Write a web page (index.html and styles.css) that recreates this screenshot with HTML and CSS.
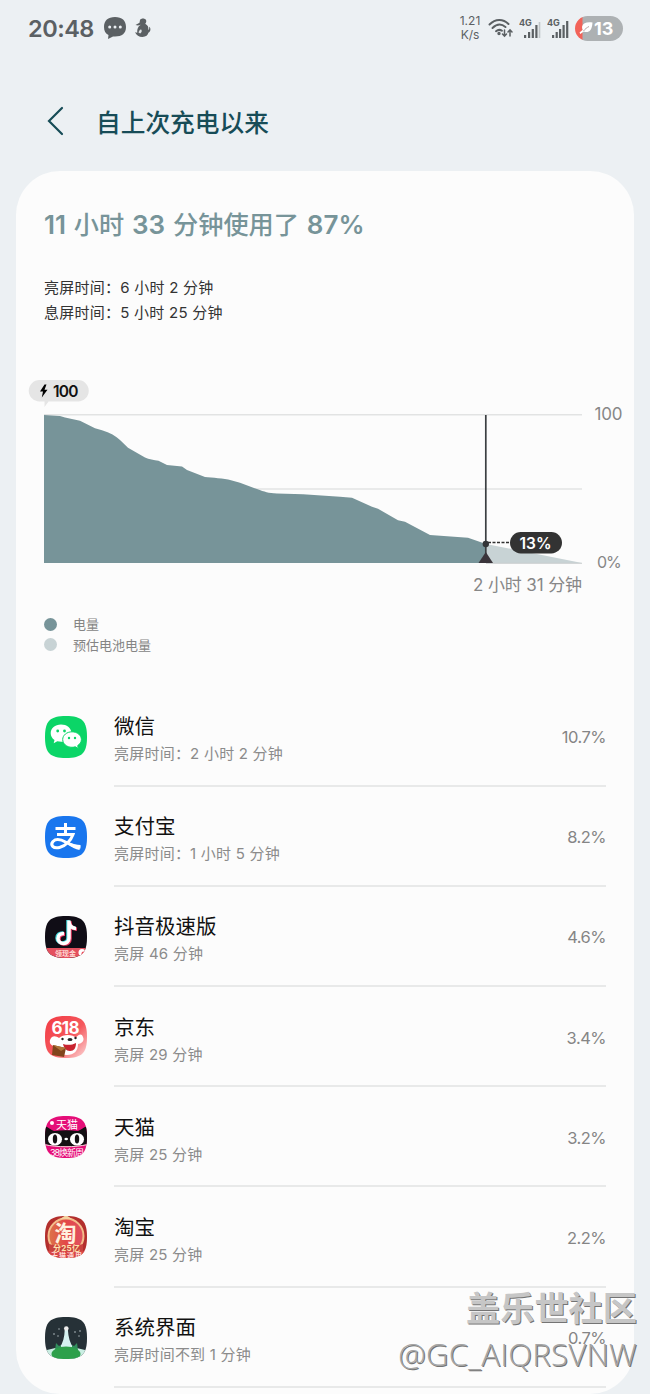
FILE: index.html
```html
<!DOCTYPE html>
<html lang="zh-CN">
<head>
    <meta charset="UTF-8">
    <meta name="viewport" content="width=device-width, initial-scale=1.0">
    <title>自上次充电以来</title>
    <link rel="stylesheet" href="styles.css">
</head>
<body>
<div class="status-bar">
    <span class="clock">20:48</span>
    <svg class="chat-icon" width="24" height="24" viewBox="0 0 24 24">
        <path d="M12 1C5 1 1 4.500 1 11c0 4 1.500 6.500 4.500 8L5 23l5-2.500h2c7 0 11-3 11-9.500S19 1 12 1z" fill="#5b6063"/>
        <circle cx="6.700" cy="11" r="1.500" fill="#ecf0f3"/>
        <circle cx="12" cy="11" r="1.500" fill="#ecf0f3"/>
        <circle cx="17.300" cy="11" r="1.500" fill="#ecf0f3"/>
    </svg>
    <svg class="app-icon" width="18" height="20" viewBox="0 0 18 20">
        <path d="M6 2c1-2 5-2 6 0 .7 1.500 0 2.800-.8 3.800 2.600 1.400 3.600 3.400 3 6.200 1-.6 1.300-1.800.8-3.200 2.200 1.200 1.800 4.800-.6 6-.4 2.200-2.400 4.200-6 4.200-3.400 0-6-1.800-7.400-4.700l2.200.4C3 11 4 8.300 6.800 6.800L4 7.500 1.500 7l4-2.300z" fill="#5b6063"/>
        <path d="M4.500 14.500c1-3 2.300-3.600 3-2.600.8 1.200-.3 2.800-1.300 3.600z" fill="#dfe4e6"/>
    </svg>
    <div class="status-right">
        <div class="net-speed"><span>1.21</span><span>K/s</span></div>
        <svg width="25" height="20" viewBox="0 0 25 20" fill="none" stroke="#5b6063" stroke-width="2" stroke-linecap="round">
            <path d="M1.500 6.500C7.500.5 15 .5 20.500 6"/>
            <path d="M4.500 10C9 5.700 13.500 5.700 17.500 9"/>
            <path d="M8 13.200c2.200-1.800 4-1.800 6-.4"/>
            <circle cx="11" cy="15.500" r=".7" fill="#5b6063"/>
            <path d="M16.500 12v6m-2-2 2 2.200 2-2.200M22 18v-6m-2 2 2-2.200 2 2.200" stroke-width="1.500"/>
        </svg>
        <svg class="signal" width="22" height="21" viewBox="0 0 22 21">
            <text x="0" y="8" class="net-type">4G</text>
            <path d="M5 17h2.200v3H5zM9 14h2.200v6H9zM12.700 11h2.200v9h-2.200zM16.300 7h2.200v13h-2.200z" fill="#5b6063"/>
            <path d="M19.700 4h1.600v16h-1.600z" fill="#c0c5c8"/>
        </svg>
        <svg class="signal" width="22" height="21" viewBox="0 0 22 21">
            <text x="0" y="8" class="net-type">4G</text>
            <path d="M5 17h2.200v3H5zM8.600 14h2.200v6H8.600zM12 11h2.200v9H12zM15.500 7h2.200v13h-2.200zM19.100 3h2.200v17h-2.200z" fill="#5b6063"/>
        </svg>
        <div class="battery">
            <svg width="14" height="13" viewBox="0 0 14 13">
                <path d="M13.500.5C8-.2 4 .8 3.200 4.300c-.3 1.500 0 2.700.6 3.500L.5 10.500l.8 1.500 3.500-2.500c4 1.500 8.200.3 8.700-9z" fill="#fff"/>
                <path d="M4.500 9C6 7 8 5.500 10 4.500" stroke="#b4a3a3" fill="none"/>
            </svg>
            <span>13</span>
        </div>
    </div>
</div>

<header>
    <svg width="18" height="30" viewBox="0 0 18 30"><path d="M16 2 3 15l13 13" fill="none" stroke="#174c57" stroke-width="2.200" stroke-linecap="round"/></svg>
    <h1>自上次充电以来</h1>
</header>

<main class="card">
    <h2>11 <span class="cjk">小时</span> 33 <span class="cjk">分钟使用了</span> 87%</h2>
    <div class="times">
        <p>亮屏时间：6 小时 2 分钟</p>
        <p>息屏时间：5 小时 25 分钟</p>
    </div>

    <svg class="chart" width="618" height="230" viewBox="16 370 618 230">
        <path d="M44 414.700H582M44 489H582" stroke="#e2e3e3" stroke-width="1.500"/>
        <path d="M44 563V415L60 416 65 417.500 80 420.700 95 428.300 102 430.300C110 433 116 436 120 440L128 447.700 145 457.500C149 459.500 154 460 158.500 460.700L167 465 182 466.500 187 470 205 477C212 478 224 478 231 480.200L240 482.700 257 489C265 492 268 493 277 493.500L303 494.300 340 496.700 352 497.700 372 506.700 378 508.700 398 520.300 405 521.700 430 535 468 537.700 486 544V563z" fill="#779499"/>
        <path d="M486 544 582 563H486z" fill="#c8d3d5"/>
        <path d="M486 563.300H582" stroke="#c8cccd"/>
        <path d="M485.800 415V560" stroke="#3b3f42" stroke-width="1.700"/>
        <path d="M488 542.500H510" stroke="#303030" stroke-width="1.500" stroke-dasharray="3 1.500"/>
        <circle cx="485.800" cy="544" r="3.200" fill="#343638"/>
        <path d="M478.500 563 485.800 552 493 563z" fill="#3a353b"/>
        <rect x="510" y="532" width="52" height="21.500" rx="10.700" fill="#333"/>
        <text x="519.500" y="548.500" class="now-label" textLength="32">13%</text>
        <path d="M39.500 380H78a10.700 10.700 0 0 1 0 21.500H48.500l-4 5.500V401.500H39.500a10.700 10.700 0 0 1 0-21.500z" fill="#e5e5e5"/>
        <path d="M44.500 384.500 40 391.500h3l-1.200 6 5.700-7.800h-3l2-5.200z"/>
        <text x="53" y="396.700" class="full-label" textLength="25.500">100</text>
        <text x="594.500" y="420" class="axis" textLength="28">100</text>
        <text x="597" y="568" class="axis zero">0%</text>
        <text x="582" y="590.500" class="axis" text-anchor="end" textLength="109">2 小时 31 分钟</text>
    </svg>

    <ul class="legend">
        <li><i class="dot"></i>电量</li>
        <li><i class="dot light"></i>预估电池电量</li>
    </ul>

    <ul class="apps">
        <li>
            <svg class="icon" width="44" height="44" viewBox="0 0 44 44">
                <path d="M22 1C6 1 1 6 1 22s5 21 21 21 21-5 21-21S38 1 22 1z" fill="#0bd567"/>
                <path d="M17 9.500c-6 0-10.300 3.800-10.300 8.700 0 2.800 1.400 5.200 3.800 6.800l-.8 3.200 3.600-1.900c8.500 2 14.500-2.600 14.200-8.600-.4-4.800-4.700-8.200-10.500-8.200z" fill="#fff"/>
                <path d="M28 16.800c-5.200 0-9.300 3.400-9.300 7.700s4 7.800 9.300 7.800c1.200 0 2.300-.2 3.300-.5l3.100 1.700-.7-2.900c2.300-1.500 3.700-3.600 3.700-6.100 0-4.300-4.200-7.700-9.400-7.700z" fill="#fff" stroke="#0bd567"/>
                <g fill="#0bd567"><circle cx="13.700" cy="16" r="1.400"/><circle cx="20.500" cy="16" r="1.400"/><circle cx="25" cy="23" r="1.200"/><circle cx="31" cy="23" r="1.200"/></g>
            </svg>
            <div class="info"><h3>微信</h3><p>亮屏时间：2 小时 2 分钟</p></div>
            <span class="percent">10.7%</span>
        </li>
        <li>
            <svg class="icon" width="44" height="44" viewBox="0 0 44 44">
                <path d="M22 1C6 1 1 6 1 22s5 21 21 21 21-5 21-21S38 1 22 1z" fill="#1976ee"/>
                <path d="M11.500 13.500H31.500M21.500 8v11M13 19.500H29C27 25 22 31 15.500 32.500 9 34 6 30 9 26.500c3-3 8-2 13 .8S31 32 36.500 32" fill="none" stroke="#fff" stroke-width="3"/>
                <path d="M24 27c5 2 9 3 12.500 3l-1 5c-4-.5-8-3-12-6z" fill="#fff"/>
            </svg>
            <div class="info"><h3>支付宝</h3><p>亮屏时间：1 小时 5 分钟</p></div>
            <span class="percent">8.2%</span>
        </li>
        <li>
            <svg class="icon" width="44" height="44" viewBox="0 0 44 44">
                <clipPath id="squircle"><path d="M22 1C6 1 1 6 1 22s5 21 21 21 21-5 21-21S38 1 22 1z"/></clipPath>
                <g clip-path="url(#squircle)">
                    <path d="M0 0h44v44H0z" fill="#100d16"/>
                    <path d="M0 33h44v11H0z" fill="#e4505f"/>
                    <g fill="none" stroke-width="3.500">
                        <path d="M25 5.500v17.800c0 7-11 6.500-11 .2 0-3.500 2.500-5.200 6-5M25 7c.5 4 3 6.200 7 6.500" stroke="#43d9dc" transform="translate(-1 -.5)"/>
                        <path d="M25 5.500v17.800c0 7-11 6.500-11 .2 0-3.500 2.500-5.200 6-5M25 7c.5 4 3 6.200 7 6.500" stroke="#ef3d66" transform="translate(1 .7)"/>
                        <path d="M25 5.500v17.800c0 7-11 6.500-11 .2 0-3.500 2.500-5.200 6-5M25 7c.5 4 3 6.200 7 6.500" stroke="#fff"/>
                    </g>
                    <text x="11" y="40.500" class="tag">领现金</text>
                    <circle cx="38" cy="37.500" r="3.500" fill="#fff"/>
                    <circle cx="39.500" cy="38.500" r="2" fill="#f04555"/>
                </g>
            </svg>
            <div class="info"><h3>抖音极速版</h3><p>亮屏 46 分钟</p></div>
            <span class="percent">4.6%</span>
        </li>
        <li>
            <svg class="icon" width="44" height="44" viewBox="0 0 44 44">
                <linearGradient id="jd" x2="1" y2="1"><stop stop-color="#f23a43"/><stop offset=".55" stop-color="#f5585d"/><stop offset="1" stop-color="#fde0e0"/></linearGradient>
                <g clip-path="url(#squircle)">
                    <path d="M0 0h44v44H0z" fill="url(#jd)"/>
                    <path d="M6 25c2-5 6-4 9-2 4-4 14-4 17 0 2-4 6-5 7-1 2 4-2 7-5 7 0 7-4 11-11 11-8 0-12-4-12-9-3 0-6-2-5-6z" fill="#fff"/>
                    <ellipse cx="26" cy="24.500" rx="2.500" ry="1.600" fill="#222"/>
                    <circle cx="18.500" cy="24" r="1.200" fill="#222"/>
                    <circle cx="31.500" cy="23" r="1.200" fill="#222"/>
                    <path d="M19 29c5 1.500 9 1 13-1 0 5-2 8-6 8s-6-3-7-7z" fill="#c92430"/>
                    <path d="m9 30 13 3-2 9-12-2z" fill="#81451c"/>
                    <path d="m9 30 13 3-5 3z" fill="#b07538"/>
                    <text x="7.500" y="18.500" class="jd-text" textLength="28">618</text>
                </g>
            </svg>
            <div class="info"><h3>京东</h3><p>亮屏 29 分钟</p></div>
            <span class="percent">3.4%</span>
        </li>
        <li>
            <svg class="icon" width="44" height="44" viewBox="0 0 44 44">
                <g clip-path="url(#squircle)">
                    <path d="M0 0h44v44H0z" fill="#e50e78"/>
                    <path d="M0 11C4 12 7 15 10 16c8-1 16-1 24 0 3-1 6-4 10-5v18c-14 3-30 3-44 0z" fill="#141013"/>
                    <path d="M0 29.500c14 3 30 3 44 0" fill="none" stroke="#f5d7d9"/>
                    <ellipse cx="11" cy="24.200" rx="7" ry="6.300" fill="#fff"/>
                    <ellipse cx="33" cy="24.200" rx="7" ry="6.300" fill="#fff"/>
                    <ellipse cx="11" cy="24" rx="2.200" ry="4.500" fill="#141013"/>
                    <ellipse cx="33" cy="24" rx="2.200" ry="4.500" fill="#141013"/>
                    <ellipse cx="22.200" cy="24" rx="1.800" ry="1.200" fill="#fff"/>
                    <circle cx="8" cy="8" r="2" fill="#fff"/>
                    <text x="12" y="13.500" class="tmall-text">天猫</text>
                    <text x="6" y="40.500" class="tmall-sale" textLength="34">38焕新周</text>
                </g>
            </svg>
            <div class="info"><h3>天猫</h3><p>亮屏 25 分钟</p></div>
            <span class="percent">3.2%</span>
        </li>
        <li>
            <svg class="icon" width="44" height="44" viewBox="0 0 44 44">
                <linearGradient id="tb" x2="1" y2="0"><stop stop-color="#dc7548"/><stop offset=".5" stop-color="#e34848"/><stop offset="1" stop-color="#df5262"/></linearGradient>
                <g clip-path="url(#squircle)">
                    <path d="M0 0h44v44H0z" fill="#b32f2d"/>
                    <circle cx="22" cy="21" r="17.500" fill="url(#tb)" stroke="#f4bd8b" stroke-width="2"/>
                    <path d="m22 0 6 4H16z" fill="#f4d19f"/>
                    <path d="M5 29c10 3 24 3 34 0v7H5z" fill="#c8423e"/>
                    <path d="M0 36h44v8H0z" fill="#d74545"/>
                    <text x="10.500" y="26" class="taobao-text">淘</text>
                    <text x="9" y="35.500" class="taobao-sale" textLength="27">分25亿</text>
                    <text x="7" y="43" class="tag" textLength="31">天猫通用</text>
                </g>
            </svg>
            <div class="info"><h3>淘宝</h3><p>亮屏 25 分钟</p></div>
            <span class="percent">2.2%</span>
        </li>
        <li>
            <svg class="icon" width="44" height="44" viewBox="0 0 44 44">
                <g clip-path="url(#squircle)">
                    <path d="M0 0h44v44H0z" fill="#263137"/>
                    <path d="M0 35c14-5 30-5 44 0v9H0z" fill="#caeee3"/>
                    <path d="M20.700 14h3.200c.4 7 2 13 5.500 18H15.500c3.500-5 5-11 5.200-18z" fill="#d4f1f0"/>
                    <circle cx="22.300" cy="12.500" r="2.300" fill="#eee"/>
                    <path d="M12 27l3 3 2-1v5h-6zM33 27l-3 3-2-1v5h6z" fill="#328e5c"/>
                    <ellipse cx="22" cy="38" rx="14.500" ry="7.500" fill="#2da04b"/>
                    <g fill="#b9c4c8"><circle cx="10" cy="18" r=".8"/><circle cx="15" cy="13" r=".7"/><circle cx="14" cy="20" r=".7"/><circle cx="31" cy="16" r=".8"/><circle cx="36" cy="15" r=".8"/><circle cx="35" cy="20" r=".7"/></g>
                </g>
            </svg>
            <div class="info"><h3>系统界面</h3><p>亮屏时间不到 1 分钟</p></div>
            <span class="percent">0.7%</span>
        </li>
    </ul>
</main>

<div class="watermark">
    <strong>盖乐世社区</strong>
    <span>@GC_AIQRSVNW</span>
</div>
</body>
</html>
```

FILE: styles.css
```css
* {
    box-sizing: border-box;
}

body {
    margin: 0;
    position: relative;
    height: 1394px;
    overflow: hidden;
    background-color: #ecf0f3;
    font-family: Inter, 'Noto Sans CJK SC', sans-serif;
    color: #111;
}

h1, h2, h3, p, ul {
    margin: 0;
    padding: 0;
}

ul {
    list-style: none;
}

.status-bar {
    display: flex;
    align-items: center;
    height: 56px;
    padding: 0 27px 0 28px;
    color: #5b6063;
}

.clock {
    width: 75px;
    font-size: 23.500px;
    font-weight: 600;
    letter-spacing: -0.5px;
}

.app-icon {
    margin-left: 7px;
}

.status-right {
    display: flex;
    align-items: center;
    gap: 6px;
    margin-left: auto;
}

.net-speed {
    display: flex;
    flex-direction: column;
    width: 24px;
    align-items: center;
    font-size: 12px;
    line-height: 14px;
}

.net-type {
    font-size: 9px;
    font-weight: 700;
    fill: #5b6063;
}

.battery {
    display: flex;
    align-items: center;
    gap: 1px;
    width: 48px;
    height: 25px;
    padding-left: 4px;
    border-radius: 13px;
    background: linear-gradient(90deg, #f26359 0, #f26359 7px, #adb1b3 8px);
    color: #fff;
    font-size: 18px;
    font-weight: 700;
}

header {
    display: flex;
    align-items: center;
    height: 115px;
    padding: 15px 0 0 46px;
}

h1 {
    margin-left: 32px;
    font-size: 24.700px;
    font-weight: 500;
    color: #174c57;
}

.card {
    width: 618px;
    height: 1223px;
    margin: 0 auto;
    padding-top: 36px;
    border-radius: 44px;
    background-color: #fcfcfc;
    overflow: hidden;
}

h2 {
    margin-left: 28px;
    font-size: 26px;
    font-weight: 600;
    line-height: 36px;
    word-spacing: 1.300px;
    color: #779499;
    white-space: nowrap;
}

.cjk {
    font-size: 25.200px;
    font-weight: 500;
}

.times {
    margin: 33px 0 0 28px;
    font-size: 15px;
    line-height: 24.500px;
    letter-spacing: 0.250px;
    color: #333;
}

.chart {
    display: block;
    margin-top: 45px;
}

.axis {
    font-size: 17px;
    fill: #878787;
}

.zero {
    font-size: 16px;
    letter-spacing: -1px;
}

.now-label {
    font-size: 15.500px;
    font-weight: 600;
    fill: #fff;
}

.full-label {
    font-size: 15.500px;
    font-weight: 600;
    fill: #111;
}

.legend {
    margin: 14px 0 0 28px;
    font-size: 13px;
    line-height: 20.500px;
    color: #858585;
}

.legend li {
    display: flex;
    align-items: center;
}

.dot {
    width: 13px;
    height: 13px;
    margin-right: 16px;
    border-radius: 50%;
    background-color: #779499;
}

.dot.light {
    background-color: #c8d3d5;
}

.apps {
    margin: 31.500px 28px 0;
}

.apps li {
    display: flex;
    height: 100.200px;
}

.icon {
    flex: none;
    margin: 28px 26px 0 0;
}

.info {
    flex: 1;
    padding-top: 25.500px;
    border-bottom: 2px solid #e8e9e9;
}

.info h3 {
    font-size: 20.500px;
    font-weight: 400;
    line-height: 30px;
}

.info p {
    font-size: 15px;
    line-height: 24px;
    letter-spacing: 0.220px;
    color: #8b8b8b;
}

.percent {
    width: 70px;
    margin-left: -1px;
    padding-top: 38.500px;
    border-bottom: 2px solid #e8e9e9;
    font-size: 16.500px;
    line-height: 24px;
    letter-spacing: -0.5px;
    text-align: right;
    color: #858585;
}

/* promo lettering on the app icons */
.tag {
    font-size: 7px;
    font-weight: 700;
    fill: #ffd9d5;
}

.jd-text {
    font-size: 17px;
    font-weight: 700;
    fill: #fff;
}

.tmall-text {
    font-size: 11px;
    fill: #fff;
}

.tmall-sale {
    font-size: 9px;
    fill: #fff;
}

.taobao-text {
    font-size: 22px;
    font-weight: 700;
    fill: #fff1df;
}

.taobao-sale {
    font-size: 8px;
    font-weight: 700;
    fill: #ffe0ad;
}

.watermark {
    position: absolute;
    right: 13px;
    bottom: 18px;
    display: flex;
    flex-direction: column;
    align-items: flex-end;
    color: #c6c6c6;
    text-shadow: 1px 1px 0 #747474;
    white-space: nowrap;
}

.watermark strong {
    font-size: 34.200px;
    line-height: 46px;
}

.watermark span {
    font-family: 'Open Sans', sans-serif;
    font-size: 31px;
    font-weight: 300;
    line-height: 44px;
    letter-spacing: 0.300px;
    color: #a5a5a5;
}
```
